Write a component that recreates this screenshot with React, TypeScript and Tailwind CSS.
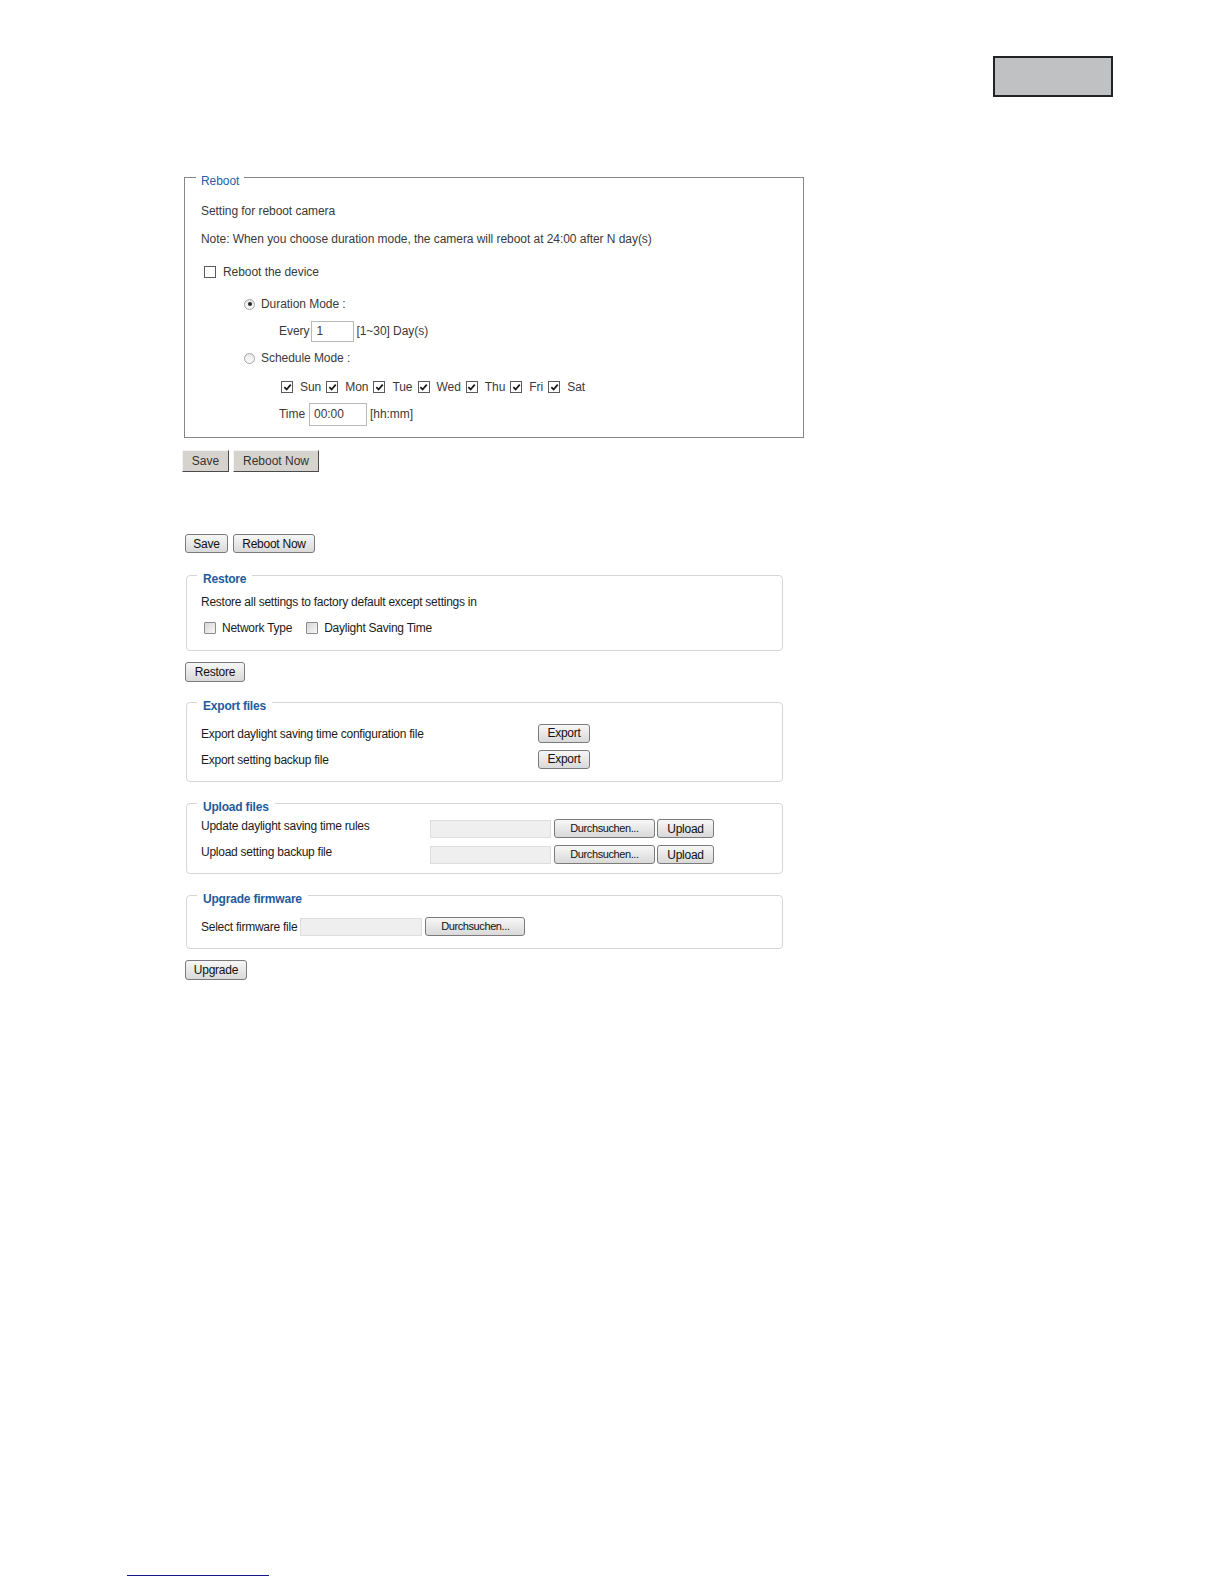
import type { ReactNode } from 'react'

// Classic flat checkbox used in the reboot panel
const ClassicCheck = ({ checked = false }: { checked?: boolean }) => (
  <span className="flex h-[12px] w-[12px] shrink-0 items-center justify-center border border-[#5a5a5a] bg-white">
    {checked && (
      <svg viewBox="0 0 10 10" className="h-[9px] w-[9px]">
        <path d="M1.5 4.6 L4 7.2 L8.6 1.8" fill="none" stroke="#1a1a1a" strokeWidth="2" />
      </svg>
    )}
  </span>
)

const Radio = ({ checked = false }: { checked?: boolean }) => (
  <span className="flex h-[11px] w-[11px] shrink-0 items-center justify-center rounded-full border border-[#a4a4a4] bg-linear-to-b from-[#e6e6e6] to-white">
    {checked && <span className="h-[4px] w-[4px] rounded-full bg-[#222]" />}
  </span>
)

// Greyish checkbox used in the lower panels
const SoftCheck = ({ className = '' }: { className?: string }) => (
  <span
    className={`h-[12px] w-[12px] shrink-0 rounded-[1px] border border-[#8c8c8c] bg-linear-to-br from-[#d6d6d6] to-[#f7f7f7] ${className}`}
  />
)

const ClassicButton = ({ children, width }: { children: ReactNode; width: string }) => (
  <button
    className={`flex h-[22px] items-center justify-center border border-t-[#f4f4f4] border-l-[#f4f4f4] border-b-[#4a4a4a] border-r-[#4a4a4a] bg-[#d6d3ce] text-[12px] text-[#333] ${width}`}
  >
    {children}
  </button>
)

const Button = ({ children, width, small = false }: { children: ReactNode; width: string; small?: boolean }) => (
  <button
    className={`flex h-[19px] shrink-0 items-center justify-center rounded-[3px] border border-[#7b7b7b] bg-linear-to-b from-[#f7f7f7] to-[#d9d9d9] text-[#111] ${
      small ? 'text-[11px] tracking-[-0.4px]' : 'text-[12px] tracking-[-0.25px]'
    } ${width}`}
  >
    {children}
  </button>
)

const FileInput = ({ width }: { width: string }) => (
  <span className={`h-[18px] shrink-0 border border-[#dedede] bg-[#efefef] ${width}`} />
)

const Panel = ({ title, children, className }: { title: string; children: ReactNode; className: string }) => (
  <fieldset className={`ml-[4px] w-[597px] rounded-[4px] border border-[#d6d6d6] pl-[10px] ${className}`}>
    <legend className="h-[22px] px-[6px] pt-[7px] text-[12px] leading-[16px] font-bold tracking-[-0.2px] text-[#1e5b9c]">
      {title}
    </legend>
    {children}
  </fieldset>
)

const days = ['Sun', 'Mon', 'Tue', 'Wed', 'Thu', 'Fri', 'Sat']

export default function App() {
  return (
    <div className="flex h-[1584px] w-[1224px] flex-col bg-white font-['Liberation_Sans',Arial,sans-serif]">
      {/* Grey tab box in the page corner */}
      <div className="mr-[111px] mt-[56px] h-[41px] w-[120px] self-end border-2 border-[#232323] bg-[#c0c1c3]" />

      <div className="flex flex-col pl-[182px]">
        {/* Reboot */}
        <fieldset className="ml-[2px] mt-[69px] w-[620px] border border-[#878787] pb-[11px] pl-[11px] text-[12px] tracking-[-0.05px] text-[#3a3a3a]">
          <legend className="h-[22px] px-[5px] pt-[7px] leading-[16px] text-[#2461a8]">Reboot</legend>
          <div className="ml-[5px] flex flex-col">
            <div className="mt-[13px] flex h-[20px] items-center">Setting for reboot camera</div>
            <div className="mt-[8px] flex h-[20px] items-center">
              Note: When you choose duration mode, the camera will reboot at 24:00 after N day(s)
            </div>
            <div className="ml-[3px] mt-[13px] flex h-[20px] items-center gap-[7px]">
              <ClassicCheck />
              <span>Reboot the device</span>
            </div>
            <div className="ml-[43px] mt-[12px] flex h-[20px] items-center gap-[6px]">
              <Radio checked />
              <span>Duration Mode :</span>
            </div>
            <div className="ml-[78px] mt-[5px] flex h-[24px] items-center">
              <span>Every</span>
              <span className="ml-[2px] flex h-[21px] w-[43px] items-center border border-[#b9b9b9] pl-[4px]">1</span>
              <span className="ml-[2px]">[1~30] Day(s)</span>
            </div>
            <div className="ml-[43px] mt-[5px] flex h-[20px] items-center gap-[6px]">
              <Radio />
              <span>Schedule Mode :</span>
            </div>
            <div className="ml-[80px] mt-[9px] flex h-[20px] items-center">
              {days.map((d) => (
                <span key={d} className="mr-[5px] flex items-center gap-[7px]">
                  <ClassicCheck checked />
                  <span>{d}</span>
                </span>
              ))}
            </div>
            <div className="ml-[78px] mt-[5px] flex h-[24px] items-center">
              <span>Time</span>
              <span className="ml-[4px] flex h-[23px] w-[58px] items-center border border-[#b9b9b9] pl-[4px]">00:00</span>
              <span className="ml-[3px]">[hh:mm]</span>
            </div>
          </div>
        </fieldset>

        <div className="mt-[12px] flex gap-[4px]">
          <ClassicButton width="w-[47px]">Save</ClassicButton>
          <ClassicButton width="w-[86px]">Reboot Now</ClassicButton>
        </div>

        {/* Lower settings */}
        <div className="flex flex-col text-[12px] tracking-[-0.25px] text-[#1b1b1b]">
          <div className="ml-[3px] mt-[62px] flex gap-[5px]">
            <Button width="w-[43px]">Save</Button>
            <Button width="w-[82px]">Reboot Now</Button>
          </div>

          <Panel title="Restore" className="mt-[11px] pb-[12px]">
            <div className="ml-[4px] mt-[6px] flex h-[20px] items-center">
              Restore all settings to factory default except settings in
            </div>
            <div className="ml-[7px] mt-[6px] flex h-[20px] items-center">
              <SoftCheck />
              <span className="ml-[6px]">Network Type</span>
              <SoftCheck className="ml-[14px]" />
              <span className="ml-[6px]">Daylight Saving Time</span>
            </div>
          </Panel>

          <div className="ml-[3px] mt-[11px] flex">
            <Button width="w-[60px] h-[20px]">Restore</Button>
          </div>

          <Panel title="Export files" className="mt-[9px] pb-[12px]">
            <div className="ml-[4px] mt-[10px] flex h-[20px] items-center">
              <span className="w-[337px] pt-[2px]">Export daylight saving time configuration file</span>
              <Button width="w-[52px]">Export</Button>
            </div>
            <div className="ml-[4px] mt-[6px] flex h-[20px] items-center">
              <span className="w-[337px] pt-[2px]">Export setting backup file</span>
              <Button width="w-[52px]">Export</Button>
            </div>
          </Panel>

          <Panel title="Upload files" className="mt-[10px] pb-[9px]">
            <div className="ml-[4px] mt-[5px] flex h-[19px] items-center">
              <span className="w-[229px] pb-[6px]">Update daylight saving time rules</span>
              <FileInput width="w-[121px]" />
              <span className="ml-[3px] flex">
                <Button width="w-[101px]" small>
                  Durchsuchen...
                </Button>
              </span>
              <span className="ml-[2px] flex">
                <Button width="w-[57px]">Upload</Button>
              </span>
            </div>
            <div className="ml-[4px] mt-[7px] flex h-[19px] items-center">
              <span className="w-[229px] pb-[6px]">Upload setting backup file</span>
              <FileInput width="w-[121px]" />
              <span className="ml-[3px] flex">
                <Button width="w-[101px]" small>
                  Durchsuchen...
                </Button>
              </span>
              <span className="ml-[2px] flex">
                <Button width="w-[57px]">Upload</Button>
              </span>
            </div>
          </Panel>

          <Panel title="Upgrade firmware" className="mt-[10px] pb-[12px]">
            <div className="ml-[4px] mt-[11px] flex h-[19px] items-center">
              <span className="mr-[3px]">Select firmware file</span>
              <FileInput width="w-[122px]" />
              <span className="ml-[3px] flex">
                <Button width="w-[100px]" small>
                  Durchsuchen...
                </Button>
              </span>
            </div>
          </Panel>

          <div className="ml-[3px] mt-[11px] flex">
            <Button width="w-[62px] h-[20px]">Upgrade</Button>
          </div>
        </div>
      </div>

      {/* Footnote rule */}
      <div className="mb-[8px] ml-[127px] mt-auto h-px w-[142px] bg-[#16168a]" />
    </div>
  )
}
